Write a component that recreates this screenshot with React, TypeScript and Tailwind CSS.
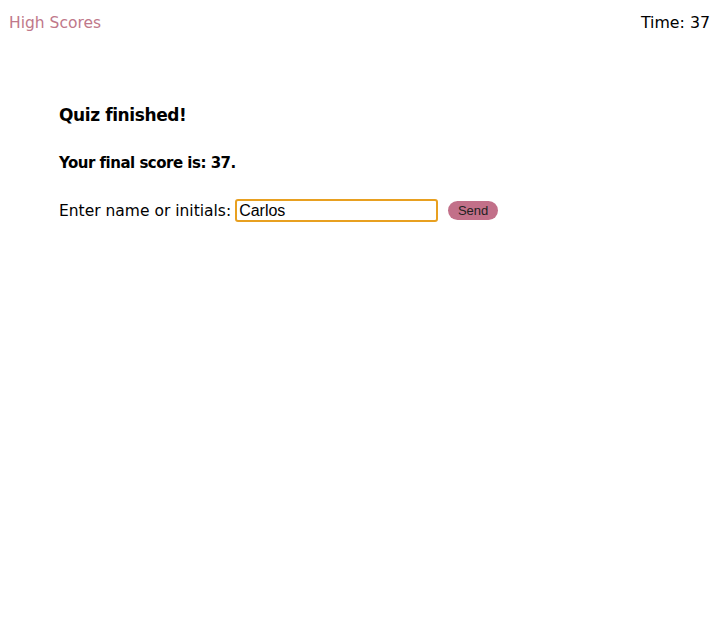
export default function App() {
  const font = { fontFamily: '"DejaVu Sans", Verdana, sans-serif' };
  return (
    <div className="min-h-[639px] w-[719px] bg-white text-black" style={font}>
      <div className="flex items-start justify-between px-[9px] pt-[13px]">
        <a className="text-[15.5px] leading-[20px] text-[#c0788a]">High Scores</a>
        <div className="text-[15.8px] leading-[20px]">Time: 37</div>
      </div>
      <div className="pl-[59px] pt-[70px]">
        <h2 className="text-[17px] font-bold leading-[24px] tracking-[-0.4px]">Quiz finished!</h2>
        <p className="mt-[26px] text-[15px] font-bold leading-[20px] tracking-[-0.5px]">Your final score is: 37.</p>
        <div className="mt-[26px] flex items-center">
          <label className="text-[15.5px] leading-[20px]">Enter name or initials:</label>
          <input
            defaultValue="Carlos"
            className="ml-[4px] h-[23px] w-[203px] rounded-[3px] border-2 border-[#e8a020] px-[2px] text-[16px] outline-none"
            style={{ fontFamily: '"Liberation Sans", Arial, sans-serif' }}
          />
          <button
            className="ml-[10px] h-[19px] w-[50px] rounded-full bg-[#c27089] text-[13px] leading-[19px] text-[#222]"
            style={{ fontFamily: '"Liberation Sans", Arial, sans-serif' }}
          >
            Send
          </button>
        </div>
      </div>
    </div>
  );
}
